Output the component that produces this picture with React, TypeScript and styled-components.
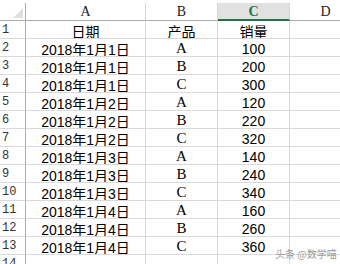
import React from 'react'
import styled, { createGlobalStyle } from 'styled-components'

const GlobalStyle = createGlobalStyle`
  html, body {
    margin: 0;
    padding: 0;
    background: #ffffff;
    overflow: hidden;
  }
`

const Frame = styled.div`
  position: relative;
  width: 340px;
  height: 264px;
  overflow: hidden;
  background: #ffffff;
`

const Sheet = styled.div`
  display: grid;
  grid-template-columns: 26px 120px 72px 72px 72px;
  grid-auto-rows: 18px;
  padding-top: 3px;
  width: 362px;
`

const Corner = styled.div`
  position: relative;
  box-sizing: border-box;
  border-right: 1px solid #ababab;
  border-bottom: 1px solid #ababab;
  background: #ffffff;

  &::after {
    content: '';
    position: absolute;
    right: 2px;
    bottom: 2px;
    width: 0;
    height: 0;
    border-left: 10px solid transparent;
    border-bottom: 10px solid #dfdfdf;
  }
`

const ColHead = styled.div<{ $active?: boolean }>`
  box-sizing: border-box;
  display: flex;
  align-items: center;
  justify-content: center;
  border-right: 1px solid #d4d4d4;
  border-bottom: ${(p) => (p.$active ? '2px solid #217346' : '1px solid #ababab')};
  background: ${(p) => (p.$active ? '#e1e1e1' : '#ffffff')};
  color: ${(p) => (p.$active ? '#217346' : '#222222')};
  font-family: 'Liberation Serif', serif;
  font-weight: ${(p) => (p.$active ? 700 : 400)};
  font-size: 14px;
  padding-top: 1px;
`

const RowHead = styled.div`
  box-sizing: border-box;
  display: flex;
  align-items: center;
  padding-left: 2px;
  padding-top: 1px;
  border-right: 1px solid #ababab;
  border-bottom: 1px solid #d9d9d9;
  color: #333333;
  font-family: 'Liberation Mono', monospace;
  font-size: 12px;
`

const Cell = styled.div<{ $serif?: boolean }>`
  box-sizing: border-box;
  display: flex;
  align-items: center;
  justify-content: center;
  padding-top: 2px;
  border-right: 1px solid #d9d9d9;
  border-bottom: 1px solid #d9d9d9;
  color: #000000;
  font-family: ${(p) =>
    p.$serif
      ? "'Liberation Serif', serif"
      : "'Liberation Sans', 'Noto Sans CJK SC', sans-serif"};
  font-size: ${(p) => (p.$serif ? '15px' : '14px')};
  white-space: nowrap;
  overflow: hidden;
`

const Watermark = styled.div`
  position: absolute;
  left: 275px;
  top: 246px;
  color: #8a8a8a;
  font-family: 'Noto Sans CJK SC', sans-serif;
  font-size: 10px;
  opacity: 0.85;
  text-shadow: 0 0 1px #ffffff;
  white-space: nowrap;
`

const columns = ['A', 'B', 'C', 'D']

const rows: [string, string, string][] = [
  ['日期', '产品', '销量'],
  ['2018年1月1日', 'A', '100'],
  ['2018年1月1日', 'B', '200'],
  ['2018年1月1日', 'C', '300'],
  ['2018年1月2日', 'A', '120'],
  ['2018年1月2日', 'B', '220'],
  ['2018年1月2日', 'C', '320'],
  ['2018年1月3日', 'A', '140'],
  ['2018年1月3日', 'B', '240'],
  ['2018年1月3日', 'C', '340'],
  ['2018年1月4日', 'A', '160'],
  ['2018年1月4日', 'B', '260'],
  ['2018年1月4日', 'C', '360'],
  ['', '', ''],
]

export default function App() {
  return (
    <Frame>
      <GlobalStyle />
      <Sheet>
        <Corner />
        {columns.map((col) => (
          <ColHead key={col} $active={col === 'C'}>
            {col}
          </ColHead>
        ))}
        {rows.map(([date, product, sales], i) => (
          <React.Fragment key={i}>
            <RowHead>{i + 1}</RowHead>
            <Cell>{date}</Cell>
            <Cell $serif={i > 0}>{product}</Cell>
            <Cell>{sales}</Cell>
            <Cell />
          </React.Fragment>
        ))}
      </Sheet>
      <Watermark>头条 @数学喵</Watermark>
    </Frame>
  )
}
